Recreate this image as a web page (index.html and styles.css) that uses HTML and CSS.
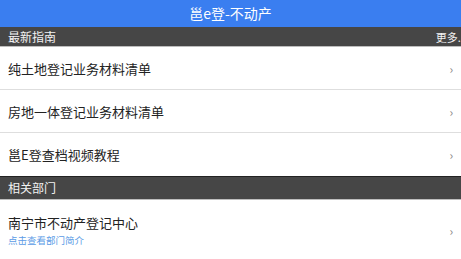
FILE: index.html
```html
<!DOCTYPE html>
<html lang="zh">
<head>
<meta charset="utf-8">
<link rel="stylesheet" href="styles.css">
</head>
<body>
<div class="app">
  <header class="topbar">邕e登-不动产</header>
  <div class="section-bar">
    <span>最新指南</span>
    <span class="more">更多...</span>
  </div>
  <ul class="list">
    <li class="row"><span class="label">纯土地登记业务材料清单</span><span class="chev">›</span></li>
    <li class="row"><span class="label">房地一体登记业务材料清单</span><span class="chev">›</span></li>
    <li class="row"><span class="label">邕E登查档视频教程</span><span class="chev">›</span></li>
  </ul>
  <div class="section-bar tall">
    <span>相关部门</span>
  </div>
  <ul class="list">
    <li class="row dept">
      <div class="dept-text">
        <span class="label">南宁市不动产登记中心</span>
        <span class="sub">点击查看部门简介</span>
      </div>
      <span class="chev">›</span>
    </li>
  </ul>
</div>
</body>
</html>
```
FILE: styles.css
```css
* { box-sizing: border-box; }
html, body { margin: 0; padding: 0; background: #fff; }
body {
  font-family: "Noto Sans CJK SC", "Noto Sans", sans-serif;
  color: #222;
}
.app { width: 461px; overflow: hidden; }
.topbar {
  height: 27px;
  background: #3a7ef0;
  color: #fff;
  font-size: 14px;
  line-height: 27px;
  text-align: center;
}
.section-bar {
  height: 20px;
  background: #464646;
  color: #f2f2f2;
  font-size: 12px;
  line-height: 20px;
  padding: 0 0 0 8px;
  display: flex;
  justify-content: space-between;
  border-bottom: 1px solid #bdbdbd;
  white-space: nowrap;
}
.section-bar.tall {
  height: 24px;
  line-height: 22px;
  border-top: 1px solid #222;
}
.more { margin-right: -6px; font-size: 11px; }
.list { list-style: none; margin: 0; padding: 0; }
.row {
  height: 43px;
  display: flex;
  align-items: center;
  justify-content: space-between;
  padding: 0 8px;
  border-bottom: 1px solid #dedede;
  font-size: 13px;
}
.list .row:last-child { border-bottom: none; }
.chev { color: #888; font-size: 12px; }
.row.dept { height: 60px; }
.dept-text { display: flex; flex-direction: column; }
.sub { color: #5b9be6; font-size: 9.5px; margin-top: 1px; }
```
